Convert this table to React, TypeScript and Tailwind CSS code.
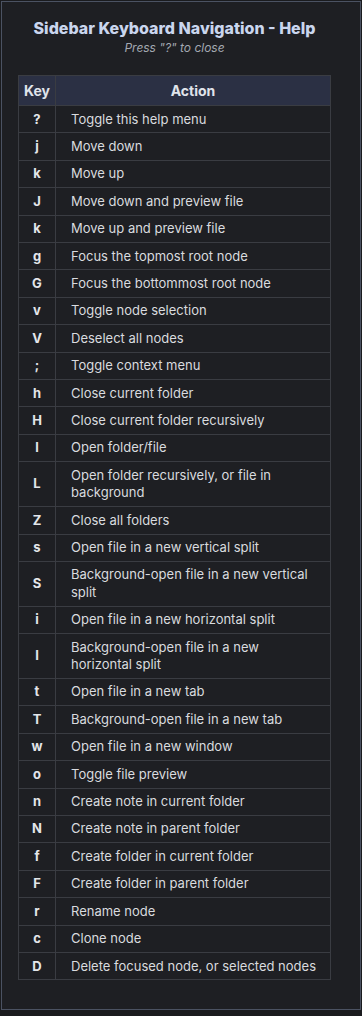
import React from 'react';

const shortcuts: [string, string][] = [
  ['?', 'Toggle this help menu'],
  ['j', 'Move down'],
  ['k', 'Move up'],
  ['J', 'Move down and preview file'],
  ['k', 'Move up and preview file'],
  ['g', 'Focus the topmost root node'],
  ['G', 'Focus the bottommost root node'],
  ['v', 'Toggle node selection'],
  ['V', 'Deselect all nodes'],
  [';', 'Toggle context menu'],
  ['h', 'Close current folder'],
  ['H', 'Close current folder recursively'],
  ['l', 'Open folder/file'],
  ['L', 'Open folder recursively, or file in background'],
  ['Z', 'Close all folders'],
  ['s', 'Open file in a new vertical split'],
  ['S', 'Background-open file in a new vertical split'],
  ['i', 'Open file in a new horizontal split'],
  ['I', 'Background-open file in a new horizontal split'],
  ['t', 'Open file in a new tab'],
  ['T', 'Background-open file in a new tab'],
  ['w', 'Open file in a new window'],
  ['o', 'Toggle file preview'],
  ['n', 'Create note in current folder'],
  ['N', 'Create note in parent folder'],
  ['f', 'Create folder in current folder'],
  ['F', 'Create folder in parent folder'],
  ['r', 'Rename node'],
  ['c', 'Clone node'],
  ['D', 'Delete focused node, or selected nodes'],
];

export default function App() {
  return (
    <div className="min-h-screen bg-[#1a1b1e] p-px font-['Inter',sans-serif]">
      <div className="h-[1009px] border border-[#4b5262] bg-[#1e1f23] pl-4 pr-[29px] pt-4">
        <h1 className="text-center text-[16px] leading-5 font-extrabold text-[#cad6ee]">
          Sidebar Keyboard Navigation - Help
        </h1>
        <p className="mt-[2px] text-center text-[12px] leading-4 italic text-[#a3a8b1]">
          Press "?" to close
        </p>
        <table className="mt-[19px] w-full border-collapse text-[13px] text-[#d9dbdf]">
          <thead>
            <tr className="bg-[#2b3044] text-[#e0e4eb]">
              <th className="w-[37px] border border-[#3a3c42] py-[4.5px] text-center text-[14px] leading-5 font-bold">
                Key
              </th>
              <th className="border border-[#3a3c42] py-[4.5px] text-center text-[14px] leading-5 font-bold">
                Action
              </th>
            </tr>
          </thead>
          <tbody>
            {shortcuts.map(([key, action], i) => (
              <tr key={i}>
                <td className="border border-[#3a3c42] py-[4.5px] text-center leading-[17.4px] font-bold text-[#e4e6ea]">
                  {key}
                </td>
                <td className="border border-[#3a3c42] py-[4.5px] pl-[15px] pr-2 leading-[17.4px]">
                  {action}
                </td>
              </tr>
            ))}
          </tbody>
        </table>
      </div>
    </div>
  );
}
